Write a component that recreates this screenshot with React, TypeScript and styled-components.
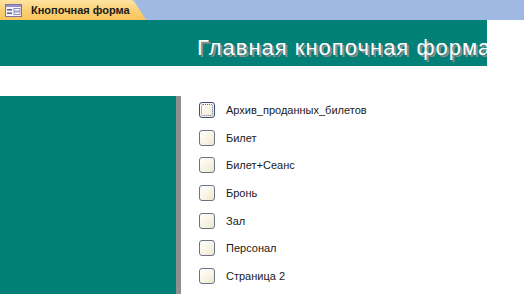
import { FC } from 'react';
import styled, { createGlobalStyle } from 'styled-components';

const GlobalStyle = createGlobalStyle`
  html, body {
    margin: 0;
    padding: 0;
    background: #ffffff;
    overflow: hidden;
  }
  body {
    font-family: 'Liberation Sans', Arial, sans-serif;
  }
`;

const Page = styled.div`
  width: 524px;
  height: 294px;
  display: flex;
  flex-direction: column;
  overflow: hidden;
`;

const TabBar = styled.div`
  height: 20px;
  background: #9fb9e2;
  display: flex;
  align-items: stretch;
  flex-shrink: 0;
`;

const Tab = styled.div`
  width: 146px;
  display: flex;
  align-items: center;
  gap: 9px;
  padding-left: 5px;
  box-sizing: border-box;
  background: linear-gradient(to bottom, #fde3a2 0%, #fbcf72 55%, #f8c35c 100%);
  clip-path: polygon(0 0, 131px 0, 134px 1px, 146px 20px, 0 20px);
  font-size: 11px;
  font-weight: bold;
  color: #1a1a1a;
`;

const Header = styled.div`
  height: 46px;
  display: flex;
  flex-shrink: 0;
`;

const TitleBand = styled.div`
  width: 487px;
  background: #018077;
  overflow: hidden;
  white-space: nowrap;
  padding-left: 197px;
  padding-top: 15px;
  box-sizing: border-box;
  font-family: 'Liberation Sans', Arial, sans-serif;
  font-size: 22px;
  letter-spacing: 1px;
  color: #ffffff;
  text-shadow: 2px 2px 0 #8c8c8c;
`;

const Gap = styled.div`
  height: 30px;
  flex-shrink: 0;
`;

const Body = styled.div`
  flex: 1;
  display: flex;
`;

const SidePanel = styled.div`
  width: 176px;
  background: #018077;
`;

const Divider = styled.div`
  width: 5px;
  background: #8f8f8f;
`;

const List = styled.div`
  display: flex;
  flex-direction: column;
  padding-left: 18px;
`;

const Row = styled.div`
  height: 27.7px;
  display: flex;
  align-items: center;
  gap: 11px;
  font-size: 11px;
  color: #1a1a1a;
`;

const Check = styled.div<{ $focused?: boolean }>`
  width: 14px;
  height: 14px;
  border: 1px solid ${p => (p.$focused ? '#3d4f78' : '#6a7489')};
  border-radius: 3px;
  background: linear-gradient(135deg, #ffffff 0%, #f7f2e2 60%, #efe6c8 100%);
  position: relative;
  &::after {
    content: '';
    display: ${p => (p.$focused ? 'block' : 'none')};
    position: absolute;
    inset: 1px;
    border: 1px dotted #5c6c96;
    border-radius: 2px;
  }
`;

const FormIcon: FC = () => (
  <svg width="17" height="13" viewBox="0 0 17 13">
    <rect x="0.5" y="0.5" width="16" height="12" fill="#f4f4fb" stroke="#7b74a8" />
    <rect x="1" y="1" width="15" height="2" fill="#9b90c8" />
    <rect x="2" y="5" width="5" height="1.5" fill="#5d5b8a" />
    <rect x="2" y="8.5" width="5" height="1.5" fill="#5d5b8a" />
    <rect x="9" y="4.5" width="6" height="2.5" fill="#ffffff" stroke="#7b74a8" strokeWidth="0.8" />
    <rect x="9" y="8" width="6" height="2.5" fill="#ffffff" stroke="#7b74a8" strokeWidth="0.8" />
  </svg>
);

const items = [
  'Архив_проданных_билетов',
  'Билет',
  'Билет+Сеанс',
  'Бронь',
  'Зал',
  'Персонал',
  'Страница 2',
];

const App: FC = () => (
  <Page>
    <GlobalStyle />
    <TabBar>
      <Tab>
        <FormIcon />
        Кнопочная форма
      </Tab>
    </TabBar>
    <Header>
      <TitleBand>Главная кнопочная форма</TitleBand>
    </Header>
    <Gap />
    <Body>
      <SidePanel />
      <Divider />
      <List>
        {items.map((label, i) => (
          <Row key={label}>
            <Check $focused={i === 0} />
            {label}
          </Row>
        ))}
      </List>
    </Body>
  </Page>
);

export default App;
